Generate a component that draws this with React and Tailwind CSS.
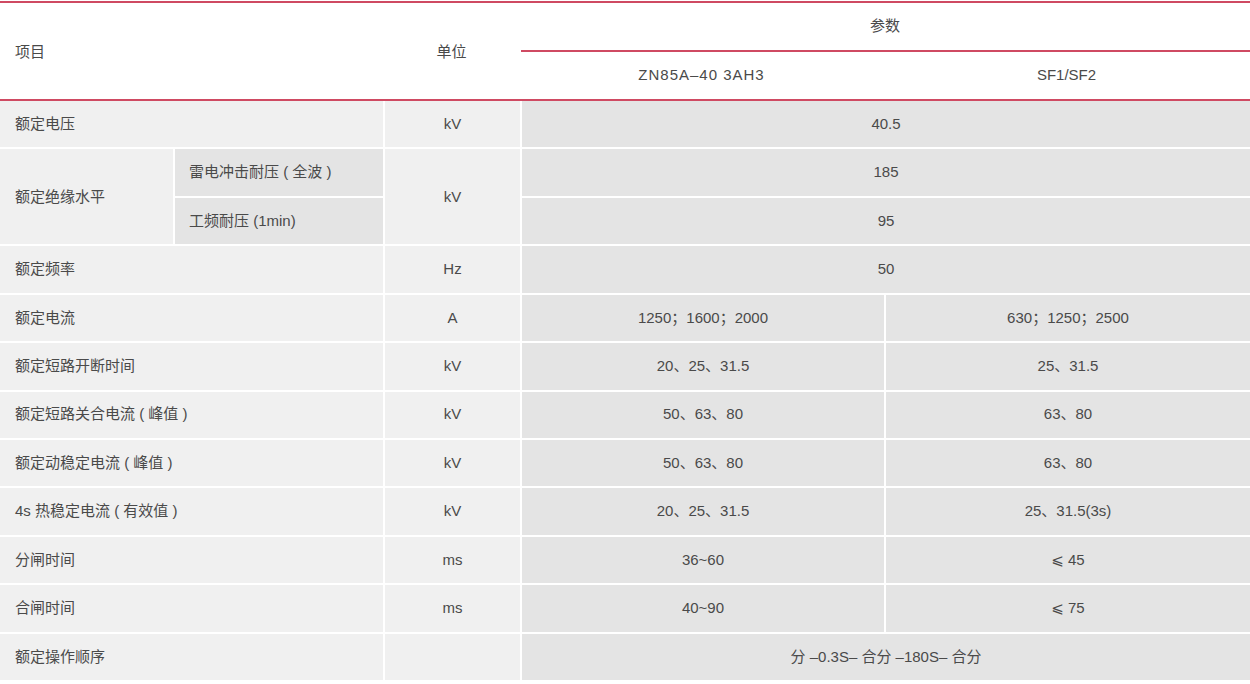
import React from "react";

const rows = [
  { label: "额定电压", unit: "kV", value: "40.5" },
  { group: "额定绝缘水平", unit: "kV", subs: [["雷电冲击耐压 ( 全波 )", "185"], ["工频耐压 (1min)", "95"]] },
  { label: "额定频率", unit: "Hz", value: "50" },
  { label: "额定电流", unit: "A", a: "1250；1600；2000", b: "630；1250；2500" },
  { label: "额定短路开断时间", unit: "kV", a: "20、25、31.5", b: "25、31.5" },
  { label: "额定短路关合电流 ( 峰值 )", unit: "kV", a: "50、63、80", b: "63、80" },
  { label: "额定动稳定电流 ( 峰值 )", unit: "kV", a: "50、63、80", b: "63、80" },
  { label: "4s 热稳定电流 ( 有效值 )", unit: "kV", a: "20、25、31.5", b: "25、31.5(3s)" },
  { label: "分闸时间", unit: "ms", a: "36~60", b: "⩽ 45" },
  { label: "合闸时间", unit: "ms", a: "40~90", b: "⩽ 75" },
  { label: "额定操作顺序", unit: "", value: "分 –0.3S– 合分 –180S– 合分" },
];

const light = "bg-[#f0f0f0] flex items-center";
const dark = "bg-[#e4e4e4] flex items-center justify-center";

export default function App() {
  return (
    <div
      className="w-[1250px] h-[684px] bg-white text-[15px] text-[#4a4a4a] overflow-hidden"
      style={{ fontFamily: '"Liberation Sans", "Noto Sans CJK SC", "DejaVu Sans", sans-serif' }}
    >
      <div className="pt-[1px]">
        <div className="h-[2px] bg-[#cf4a62]" />
        {/* header */}
        <div className="grid grid-cols-[383px_137px_1fr] h-[96px]">
          <div className="flex items-center pl-[15px] pt-[2px]">项目</div>
          <div className="flex items-center justify-center pt-[2px]">单位</div>
          <div className="flex flex-col">
            <div className="h-[47px] flex items-center justify-center">参数</div>
            <div className="h-[2px] bg-[#cf4a62] ml-[1px]" />
            <div className="flex-1 grid grid-cols-[363px_1fr]">
              <div className="flex items-center justify-center tracking-[1px]">ZN85A–40 3AH3</div>
              <div className="flex items-center justify-center">SF1/SF2</div>
            </div>
          </div>
        </div>
        <div className="h-[2px] bg-[#cf4a62]" />

        {/* body */}
        <div className="grid grid-cols-[173px_208px_135px_362px_1fr] grid-rows-[repeat(12,minmax(0,1fr))] gap-[2px] h-[579px]">
          {rows.map((r, i) => {
            if (r.subs) {
              return (
                <React.Fragment key={i}>
                  <div className={`${light} row-span-2 pl-[15px]`}>{r.group}</div>
                  <div className={`${dark} !justify-start pl-[14px]`}>{r.subs[0][0]}</div>
                  <div className={`${light} row-span-2 justify-center`}>{r.unit}</div>
                  <div className={`${dark} col-span-2`}>{r.subs[0][1]}</div>
                  <div className={`${dark} !justify-start pl-[14px]`}>{r.subs[1][0]}</div>
                  <div className={`${dark} col-span-2`}>{r.subs[1][1]}</div>
                </React.Fragment>
              );
            }
            return (
              <React.Fragment key={i}>
                <div className={`${light} col-span-2 pl-[15px]`}>{r.label}</div>
                <div className={`${light} justify-center`}>{r.unit}</div>
                {r.value ? (
                  <div className={`${dark} col-span-2`}>{r.value}</div>
                ) : (
                  <>
                    <div className={dark}>{r.a}</div>
                    <div className={dark}>{r.b}</div>
                  </>
                )}
              </React.Fragment>
            );
          })}
        </div>
      </div>
    </div>
  );
}
